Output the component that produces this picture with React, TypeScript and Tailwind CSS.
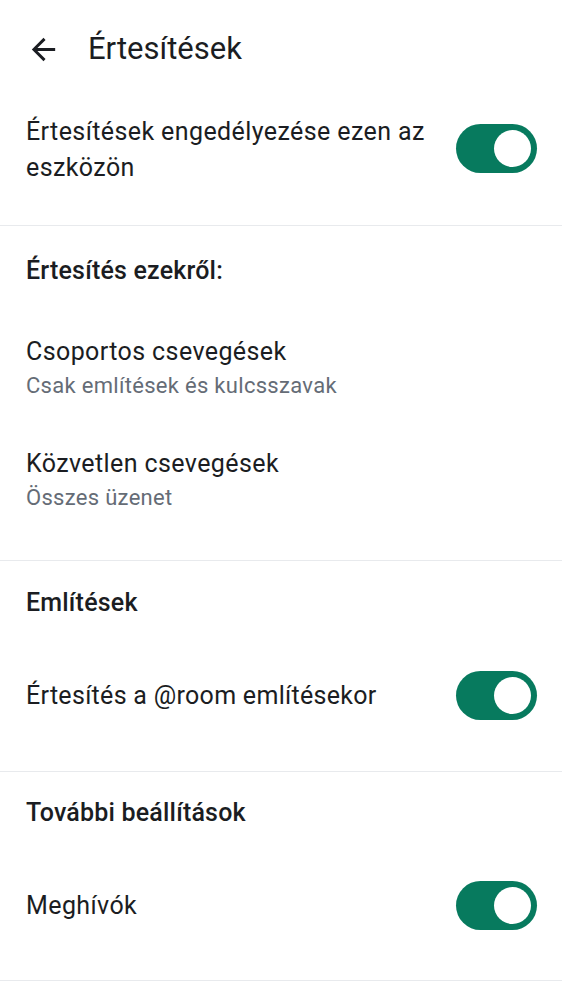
import React, { useState } from 'react';

type ToggleProps = {
  on: boolean;
  onChange: () => void;
  className?: string;
};

const Toggle = ({ on, onChange, className = '' }: ToggleProps) => (
  <button
    onClick={onChange}
    className={`relative shrink-0 w-[81px] h-[49px] rounded-full ${on ? 'bg-[#077a5e]' : 'bg-[#dfe3e8]'} ${className}`}
  >
    <span
      className={`absolute top-[6px] w-[37px] h-[37px] rounded-full bg-white ${on ? 'left-[38px]' : 'left-[6px]'}`}
    />
  </button>
);

const Divider = () => <div className="h-px bg-[#e8eaed]" />;

const App = () => {
  const [device, setDevice] = useState(true);
  const [room, setRoom] = useState(true);
  const [invites, setInvites] = useState(true);

  return (
    <div className="w-[562px] min-h-[1000px] bg-white text-[#1b1d22] font-['Roboto',sans-serif]">
      {/* fejléc */}
      <div className="flex items-center h-[98px] pl-[26px]">
        <svg viewBox="0 0 24 24" className="w-[35px] h-[35px] fill-[#1b1d22]">
          <path d="M20 11H7.83l5.59-5.59L12 4l-8 8 8 8 1.41-1.41L7.83 13H20v-2z" />
        </svg>
        <h1 className="ml-[27px] text-[31px] leading-[40px]">Értesítések</h1>
      </div>

      <div className="flex items-center justify-between pl-[26px] pr-[25px] pt-[16px] pb-[39px]">
        <p className="w-[410px] text-[25px] leading-[36px] tracking-[0.4px]">
          Értesítések engedélyezése ezen az eszközön
        </p>
        <Toggle on={device} onChange={() => setDevice(!device)} className="mb-[3px]" />
      </div>
      <Divider />

      <div className="px-[26px] pt-[29px] pb-[45px]">
        <h2 className="text-[25px] leading-[32px] font-medium tracking-[0.2px]">Értesítés ezekről:</h2>
        <div className="mt-[48px]">
          <p className="text-[25px] leading-[34px] tracking-[0.4px]">Csoportos csevegések</p>
          <p className="text-[22px] leading-[34px] tracking-[0.3px] text-[#656c76]">
            Csak említések és kulcsszavak
          </p>
        </div>
        <div className="mt-[44px]">
          <p className="text-[25px] leading-[34px] tracking-[0.4px]">Közvetlen csevegések</p>
          <p className="text-[22px] leading-[34px] tracking-[0.3px] text-[#656c76]">Összes üzenet</p>
        </div>
      </div>
      <Divider />

      <div className="pl-[26px] pr-[25px] pt-[26px] pb-[51px]">
        <h2 className="text-[25px] leading-[32px] font-medium tracking-[0.2px]">Említések</h2>
        <div className="flex items-center justify-between mt-[52px]">
          <p className="text-[25px] leading-[34px] tracking-[0.3px]">Értesítés a @room említésekor</p>
          <Toggle on={room} onChange={() => setRoom(!room)} />
        </div>
      </div>
      <Divider />

      <div className="pl-[26px] pr-[25px] pt-[25px] pb-[50px]">
        <h2 className="text-[25px] leading-[32px] font-medium tracking-[0.2px]">További beállítások</h2>
        <div className="flex items-center justify-between mt-[52px]">
          <p className="text-[25px] leading-[34px] tracking-[0.4px]">Meghívók</p>
          <Toggle on={invites} onChange={() => setInvites(!invites)} />
        </div>
      </div>
      <Divider />
    </div>
  );
};

export default App;
